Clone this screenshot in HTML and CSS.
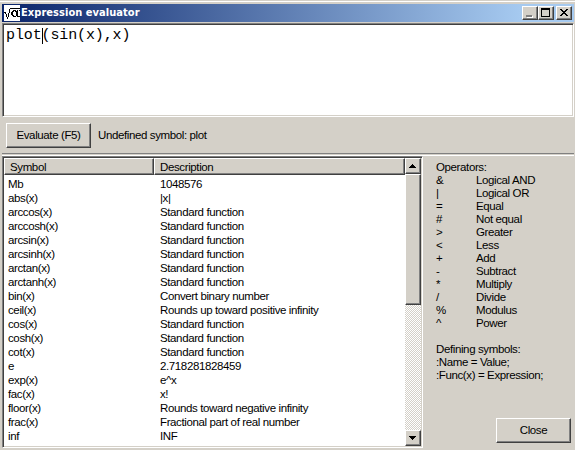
FILE: index.html
```html
<!DOCTYPE html>
<html lang="en">
<head>
<meta charset="utf-8">
<title>Expression evaluator</title>
<link rel="stylesheet" href="styles.css">
</head>
<body>
<main class="window">
  <header class="titlebar">
    <svg class="app-icon" width="16" height="16" viewBox="0 0 16 16" shape-rendering="crispEdges"><rect width="16" height="16" fill="#fff"/><path d="M0 7h2v2h1v3h1V8h1V4h1V3h10v1H6v4H5v4H4v2H3v-2H2V9H1V8H0zM9 5h3v1h1V5h1v6h1v1h-2v-1h-1v1H9v-1H8v-1H7V7h1V6h1zm0 2v3h1v1h2V7h-1V6h-1v1zM15 5h1v1h-1zM15 11h1v1h-1z" fill-rule="evenodd"/></svg>
    <h1 class="title"><span>Expression evaluator</span></h1>
    <div class="controls">
      <button class="ctl raised" aria-label="Minimize"><svg width="14" height="12" viewBox="0 0 14 12" shape-rendering="crispEdges"><path d="M4 9h6v2H4z" fill="#fff"/><path d="M3 8h6v2H3z" fill="#808080"/></svg></button>
      <button class="ctl raised" aria-label="Maximize"><svg width="14" height="12" viewBox="0 0 14 12" shape-rendering="crispEdges"><path d="M2 1h9v9H2zM3 3v6h7V3z" fill-rule="evenodd"/></svg></button>
      <button class="ctl raised close-ctl" aria-label="Close window"><svg width="14" height="12" viewBox="0 0 14 12" shape-rendering="crispEdges"><path d="M3 2h2v1h1v1h2V3h1V2h2v1h-1v1H9v1H8v1h1v1h1v1h1v1H9V8H8V7H6v1H5v1H3V8h1V7h1V6h1V5H5V4H4V3H3z"/></svg></button>
    </div>
  </header>
  <div class="editor">plot<span class="caret"></span>(sin(x),x)</div>
  <div class="actions">
    <button class="push raised">Evaluate (F5)</button>
    <span class="status">Undefined symbol: plot</span>
  </div>
  <div class="lower">
    <section class="list">
      <div class="table">
        <div class="head"><span class="th">Symbol</span><span class="th">Description</span></div>
        <div class="rows">
          <span>Mb</span><span>1048576</span>
          <span>abs(x)</span><span>|x|</span>
          <span>arccos(x)</span><span>Standard function</span>
          <span>arccosh(x)</span><span>Standard function</span>
          <span>arcsin(x)</span><span>Standard function</span>
          <span>arcsinh(x)</span><span>Standard function</span>
          <span>arctan(x)</span><span>Standard function</span>
          <span>arctanh(x)</span><span>Standard function</span>
          <span>bin(x)</span><span>Convert binary number</span>
          <span>ceil(x)</span><span>Rounds up toward positive infinity</span>
          <span>cos(x)</span><span>Standard function</span>
          <span>cosh(x)</span><span>Standard function</span>
          <span>cot(x)</span><span>Standard function</span>
          <span>e</span><span>2.718281828459</span>
          <span>exp(x)</span><span>e^x</span>
          <span>fac(x)</span><span>x!</span>
          <span>floor(x)</span><span>Rounds toward negative infinity</span>
          <span>frac(x)</span><span>Fractional part of real number</span>
          <span>inf</span><span>INF</span>
          <span>kb</span><span>1024</span>
        </div>
      </div>
      <div class="scroll">
        <div class="arrow raised"><svg width="12" height="12" viewBox="0 0 12 12" shape-rendering="crispEdges"><path d="M5 4h1v1h1v1h1v1h1v1H2V7h1V6h1V5h1z"/></svg></div>
        <div class="thumb raised"></div>
        <div class="arrow raised bottom"><svg width="12" height="12" viewBox="0 0 12 12" shape-rendering="crispEdges"><path d="M2 4h7v1H8v1H7v1H6v1H5V7H4V6H3V5H2z"/></svg></div>
      </div>
    </section>
    <aside class="help">
      <div>Operators:</div>
      <div class="ops">
        <span>&amp;</span><span>Logical AND</span>
        <span>|</span><span>Logical OR</span>
        <span>=</span><span>Equal</span>
        <span>#</span><span>Not equal</span>
        <span>&gt;</span><span>Greater</span>
        <span>&lt;</span><span>Less</span>
        <span>+</span><span>Add</span>
        <span>-</span><span>Subtract</span>
        <span>*</span><span>Multiply</span>
        <span>/</span><span>Divide</span>
        <span>%</span><span>Modulus</span>
        <span>^</span><span>Power</span>
      </div>
      <div class="defs">Defining symbols:<br>:Name = Value;<br>:Func(x) = Expression;</div>
      <button class="push raised close">Close</button>
    </aside>
  </div>
</main>
</body>
</html>
```
FILE: styles.css
```css
* { box-sizing: border-box; }
body { margin: 0; background: #d4d0c8; overflow: hidden; }
.window { width: 575px; height: 450px; border-top: 1px solid #d4d0c8; box-shadow: inset 0 1px #fff; padding: 3px 1px 0 2px; display: flex; flex-direction: column; font: 11.5px/13px "Liberation Sans", Arial, sans-serif; letter-spacing: -0.38px; color: #000; }
button { font: inherit; letter-spacing: inherit; color: inherit; padding: 0; }
svg { display: block; }
.raised { background: #d4d0c8; border: 1px solid; border-color: #fff #404040 #404040 #fff; box-shadow: inset -1px -1px #808080; }
.titlebar { height: 18px; flex: none; display: flex; align-items: center; padding: 0 2px; background: linear-gradient(90deg, #0a246a, #a6caf0 520px); }
.title { margin: 0 0 0 1px; color: #fff; font: bold 11px/18px "DejaVu Sans Condensed", "DejaVu Sans", sans-serif; letter-spacing: 0.05px; }
.controls { display: flex; margin-left: auto; }
.ctl { width: 16px; height: 14px; }
.close-ctl { margin-left: 2px; }
.editor { height: 94px; flex: none; margin-top: 1px; border: 1px solid; border-color: #808080 #fff #fff #808080; box-shadow: inset 1px 1px #404040, inset -1px -1px #d4d0c8; background: #fff; padding: 4px 3px; font: 15px/16px "Liberation Mono", monospace; letter-spacing: -0.12px; }
.caret { display: inline-block; width: 1px; height: 16px; margin-right: -1px; background: #000; vertical-align: top; }
.actions { height: 36px; flex: none; display: flex; align-items: center; gap: 7px; padding-left: 4px; }
.push { width: 85px; height: 25px; }
.lower { flex: 1; display: flex; border-top: 1px solid #808080; min-height: 0; box-shadow: inset 0 1px #d4d0c8, inset 0 2px #fff; padding-top: 2px; }
.list { width: 421px; height: 292px; display: flex; border: 1px solid; border-color: #808080 #fff #fff #808080; box-shadow: inset 1px 1px #404040, inset -1px -1px #d4d0c8; background: #fff; background-clip: padding-box; padding: 1px; }
.table { flex: 1; overflow: hidden; }
.head { height: 17px; display: grid; grid-template-columns: 150px 1fr; }
.th { background: #d4d0c8; border: 1px solid; border-color: #fff #404040 #404040 #fff; box-shadow: inset -1px -1px #808080; padding: 2px 5px 0 5px; }
.rows { display: grid; grid-template-columns: 152px 1fr; grid-auto-rows: 14px; padding: 2px 0 0 4px; line-height: 14px; }
.scroll { width: 16px; display: flex; flex-direction: column; background: repeating-conic-gradient(#fff 0 25%, #d4d0c8 0 50%) 0 0 / 2px 2px; }
.arrow { height: 16px; flex: none; padding: 1px; }
.bottom { margin-top: auto; }
.thumb { height: 131px; flex: none; }
.help { flex: 1; display: flex; flex-direction: column; padding: 5px 3px 7px 13px; }
.ops { display: grid; grid-template-columns: 40px 1fr; grid-auto-rows: 13px; }
.defs { margin-top: 13px; }
.push.close { width: 75px; margin: auto 0 0 auto; }
```
